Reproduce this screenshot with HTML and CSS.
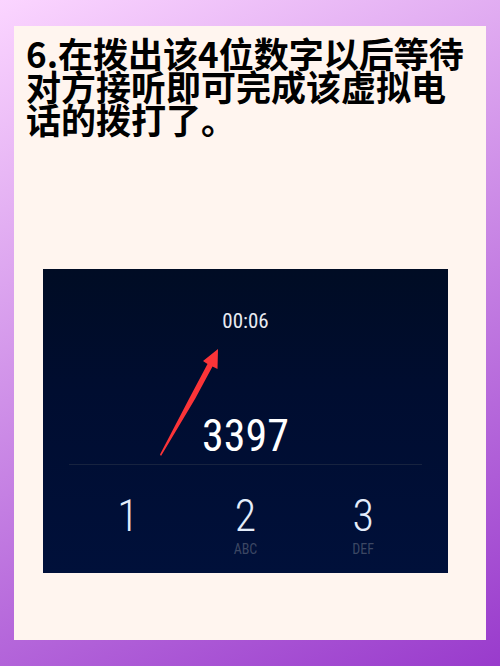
FILE: index.html
```
<!DOCTYPE html>
<html lang="zh-CN">
<head>
    <meta charset="UTF-8">
    <meta name="viewport" content="width=device-width, initial-scale=1.0">
    <title>拨打虚拟电话</title>
    <link rel="stylesheet" href="styles.css">
</head>
<body>
    <main class="card">
        <h1 class="step">6.在拨出该4位数字以后等待对方接听即可完成该虚拟电话的拨打了。</h1>

        <section class="phone">
            <div class="timer">00:06</div>
            <div class="number">3397</div>
            <div class="keypad">
                <button class="key" type="button">1<span class="letters"></span></button>
                <button class="key" type="button">2<span class="letters">ABC</span></button>
                <button class="key" type="button">3<span class="letters">DEF</span></button>
            </div>
            <svg class="arrow" width="60" height="108" viewBox="0 0 60 108" aria-hidden="true">
                <path d="M59 0L44 12L48.500 15L31 48L1 105.500L2 107L36 50L53.500 17.500L58.500 20Z" fill="#fb3438"/>
            </svg>
        </section>
    </main>
</body>
</html>
```

FILE: styles.css
```
* {
    margin: 0;
    padding: 0;
    box-sizing: border-box;
}

body {
    display: flex;
    min-height: 100vh;
    padding: 26px 14px;
    background: linear-gradient(155deg, #fbd5ff 0%, #993bcc 100%);
    font-family: Roboto, "Noto Sans CJK SC", sans-serif;
}

.card {
    flex: 1;
    background: #fff5ef;
}

.step {
    padding: 10px 16px 0 12px;
    font-family: "Noto Sans CJK SC", sans-serif;
    font-size: 35px;
    font-weight: 700;
    line-height: 33px;
    color: #000;
}

.phone {
    position: relative;
    margin: 134px 38px 0 29px;
    padding: 40px 26px 15px;
    background: linear-gradient(#000c24 0%, #000d30 40%, #00103a 100%);
    font-family: "Roboto Condensed", "Liberation Sans Narrow", Roboto, sans-serif;
    color: #fff;
    text-align: center;
}

.timer {
    font-size: 21px;
    line-height: 24px;
    color: #e8ebf2;
}

.number {
    padding: 81px 0 6px;
    border-bottom: 1px solid #17233f;
    font-size: 44px;
    line-height: 44px;
}

.keypad {
    display: grid;
    grid-template-columns: repeat(3, 1fr);
    padding-top: 27px;
}

.key {
    border: none;
    background: none;
    font-family: inherit;
    font-size: 44px;
    font-weight: 300;
    line-height: 48px;
    color: #e4edfb;
    cursor: pointer;
}

.letters {
    display: block;
    height: 18px;
    font-size: 14px;
    font-weight: 400;
    line-height: 18px;
    color: #3c4763;
}

.arrow {
    position: absolute;
    top: 80px;
    left: 116px;
}
```
